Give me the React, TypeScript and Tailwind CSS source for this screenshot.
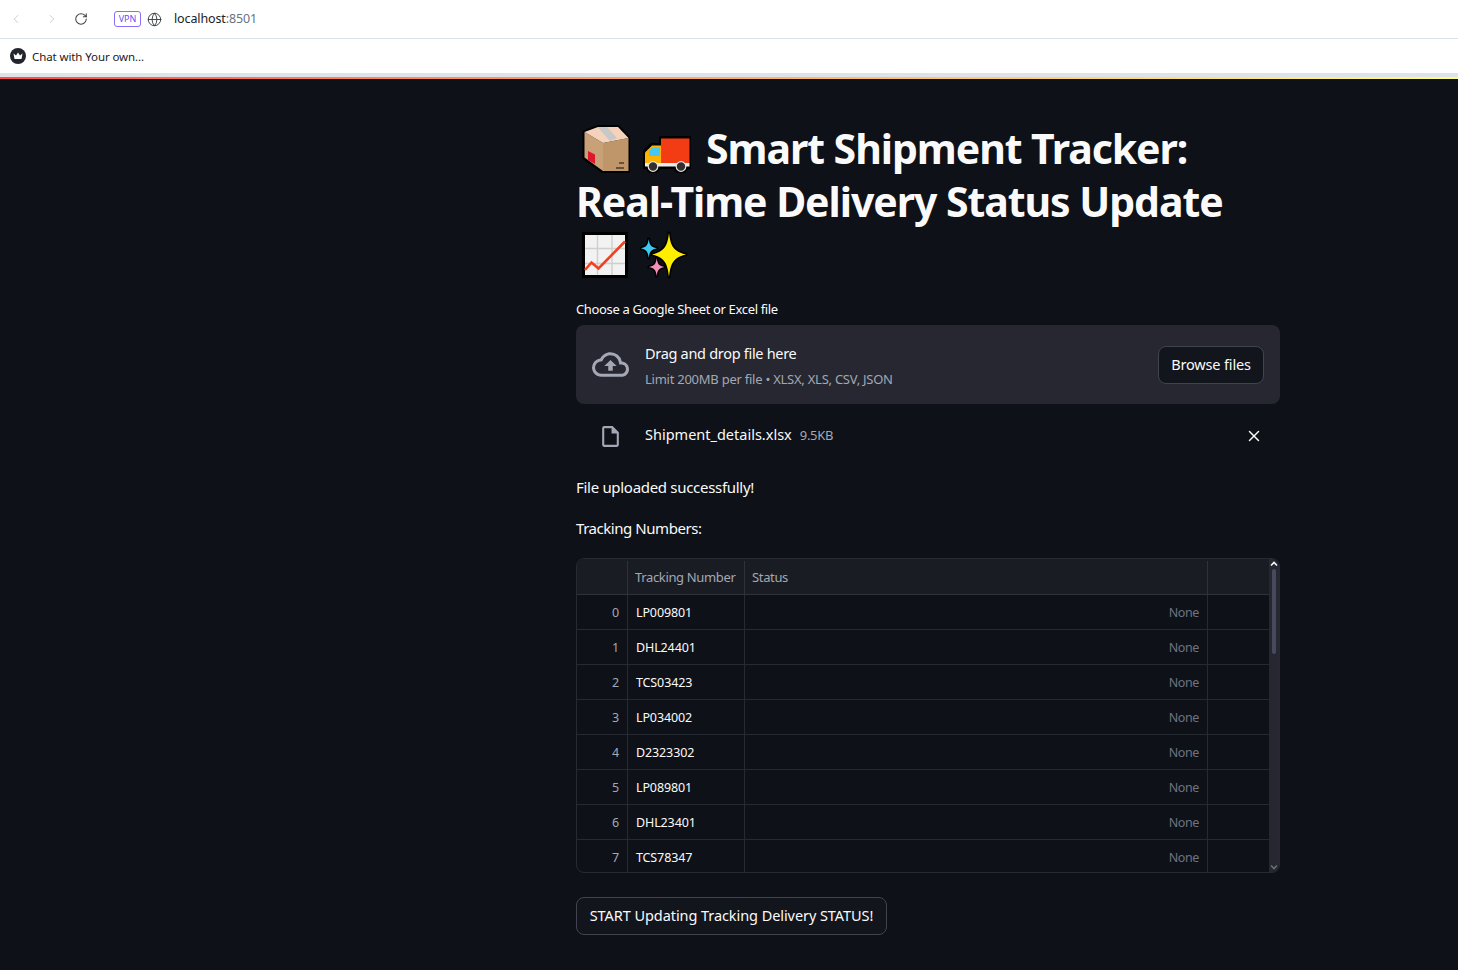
import { ChevronLeft, ChevronRight, Globe, RotateCw, X } from 'lucide-react';

const rows = ['LP009801', 'DHL24401', 'TCS03423', 'LP034002', 'D2323302', 'LP089801', 'DHL23401', 'TCS78347'];

const font = "font-['Noto_Sans',sans-serif]";

const BoxEmoji = () => (
  <svg width="48" height="48" viewBox="0 0 48 48" className="shrink-0">
    <path d="M2 7 L16 1.5 L36 1.5 L47 13 L47 47 L21 47 L2 33 Z" fill="#000" stroke="#000" strokeWidth="3" strokeLinejoin="round" />
    <path d="M2.5 7 L21 18 L21 46 L2.5 32.5 Z" fill="#c9a178" />
    <path d="M21 18 L46.5 13 L46.5 46 L21 46 Z" fill="#bf9669" />
    <path d="M2.5 7 L16 2 L36 2 L46.5 13 L21 18 Z" fill="#f5d2bb" />
    <path d="M15.5 2 L25 2 L35 13 L28 16 Z" fill="#c8c8c8" />
    <path d="M6 26 L13 29.5 L13 39 L6 35 Z" fill="#e0162b" />
    <path d="M34 43 H42 M37 38 H42" stroke="#4a3a2a" strokeWidth="1.3" />
  </svg>
);

const TruckEmoji = () => (
  <svg width="48" height="37" viewBox="0 0 48 37" className="shrink-0">
    <path d="M18 2 H46.5 V31 H43 A5 5 0 0 1 33 31 H15 A5 5 0 0 1 5 31 H1.5 V16 L8.5 9 H18 Z" fill="#000" stroke="#000" strokeWidth="4" strokeLinejoin="round" />
    <rect x="18" y="2.5" width="28.5" height="24.5" fill="#f43c14" />
    <path d="M2 27 V16.5 L9 9.5 H18 V27 Z" fill="#ffb300" />
    <path d="M9 11.5 H17 V20 H6 V15 Z" fill="#45c8f5" />
    <rect x="2" y="27" width="44.5" height="3.5" fill="#ececec" />
    <circle cx="10" cy="30.5" r="4.8" fill="#33302e" stroke="#e6e6e6" strokeWidth="1.2" />
    <circle cx="38" cy="30.5" r="4.8" fill="#33302e" stroke="#e6e6e6" strokeWidth="1.2" />
  </svg>
);

const ChartEmoji = () => (
  <svg width="46" height="46" viewBox="0 0 46 46" className="shrink-0">
    <rect x="1.5" y="1.5" width="43" height="43" fill="#f2f2f2" stroke="#000" strokeWidth="3" />
    <path d="M15.5 3 V43 M30 3 V43 M3 16.5 H43 M3 31.5 H43" stroke="#cfcfcf" strokeWidth="1.4" />
    <path d="M3 38 L9.5 30.5 L16.5 36.5 L43 9.5" fill="none" stroke="#f1411f" strokeWidth="2.6" />
  </svg>
);

const SparkleEmoji = () => (
  <svg width="50" height="48" viewBox="0 0 50 48" className="shrink-0">
    <path d="M29 2 C30.5 15 33.5 20.5 46 23.5 C33.5 26.5 30.5 32 29 46 C27.5 32 24.5 26.5 12 23.5 C24.5 20.5 27.5 15 29 2 Z" fill="#ffee00" stroke="#000" strokeWidth="3" strokeLinejoin="round" paintOrder="stroke" />
    <path d="M8.7 8 C9.4 14 11 16.2 17 17.3 C11 18.4 9.4 21 8.7 27 C8 21 6.4 18.4 0.8 17.3 C6.4 16.2 8 14 8.7 8 Z" fill="#3cc8f0" stroke="#000" strokeWidth="3" strokeLinejoin="round" paintOrder="stroke" />
    <path d="M16.7 27 C17.4 33 19 35 24.5 36 C19 37 17.4 39 16.7 45 C16 39 14.4 37 8.9 36 C14.4 35 16 33 16.7 27 Z" fill="#f48fb8" stroke="#000" strokeWidth="3" strokeLinejoin="round" paintOrder="stroke" />
  </svg>
);

const App = () => {
  return (
    <div className={`${font} flex h-[970px] w-[1458px] flex-col overflow-hidden bg-[#0e1117]`}>
      {/* Browser chrome */}
      <div className="flex h-[39px] items-center border-b border-[#d9e0e8] bg-white pl-[9px]">
        <ChevronLeft size={14} strokeWidth={1.25} className="text-[#b8bcc2]" />
        <ChevronRight size={14} strokeWidth={1.25} className="ml-[22px] text-[#b8bcc2]" />
        <RotateCw size={14} strokeWidth={1.75} className="ml-[15px] text-[#3c4043]" />
        <span className="ml-[26px] flex h-[16px] w-[27px] items-center justify-center rounded-[3px] border-[1.5px] border-[#8b6cfb] text-[9px] text-[#6b4ef0]">VPN</span>
        <Globe size={15} strokeWidth={1.5} className="ml-[6px] text-[#3c4043]" />
        <span className="ml-[12px] text-[12.5px] tracking-[-0.12px] text-[#202124]">
          localhost<span className="text-[#6b7280]">:8501</span>
        </span>
      </div>
      <div className="flex h-[34px] items-center gap-[6px] bg-white pl-[10px]">
        <svg width="16" height="16" viewBox="0 0 16 16">
          <circle cx="8" cy="8" r="8" fill="#22252b" />
          <path d="M3.5 5.5 L6 7.5 L8 4.5 L10 7.5 L12.5 5.5 L11.5 11 H4.5 Z" fill="#fff" />
        </svg>
        <span className="pt-[2px] text-[11.5px] tracking-[-0.1px] text-[#202124]">Chat with Your own...</span>
      </div>
      <div className="h-[4px] bg-[#dde3e9]" />
      <div className="h-[2px] bg-gradient-to-r from-[#ff4b4b] to-[#fffd80]" />

      {/* Page body */}
      <main className="ml-[576px] flex w-[704px] flex-col pt-[43px] text-white">
        <h1 className="text-[41px] leading-[53px] font-bold tracking-[-1.05px] text-[#fafafa]">
          <span className="flex items-center">
            <span className="ml-[6px] flex w-[124px] items-center">
              <BoxEmoji />
              <span className="mt-[11px] ml-[13px]"><TruckEmoji /></span>
            </span>
            Smart Shipment Tracker:
          </span>
          <span className="block">Real-Time Delivery Status Update</span>
          <span className="flex h-[53px] items-center pl-[6px]">
            <ChartEmoji />
            <span className="ml-[12px]"><SparkleEmoji /></span>
          </span>
        </h1>

        <label className="mt-[18px] text-[13px] leading-[20px] tracking-[-0.35px] text-[#fafafa]">Choose a Google Sheet or Excel file</label>

        <div className="mt-[6px] flex h-[79px] items-center rounded-lg bg-[#262730] pr-4 pl-4">
          <svg width="37" height="37" viewBox="0 0 24 24" fill="#a3a8b4" className="shrink-0">
            <path d="M19.35 10.04A7.49 7.49 0 0 0 12 4C9.11 4 6.6 5.64 5.35 8.04A5.994 5.994 0 0 0 0 14c0 3.31 2.69 6 6 6h13c2.76 0 5-2.24 5-5 0-2.64-2.05-4.78-4.65-4.96zM19 18H6c-2.21 0-4-1.79-4-4 0-2.05 1.53-3.76 3.56-3.97l1.07-.11.5-.95A5.469 5.469 0 0 1 12 6c2.62 0 4.88 1.86 5.39 4.43l.3 1.5 1.53.11A2.98 2.98 0 0 1 22 15c0 1.65-1.35 3-3 3zM8 13h2.55v3h2.9v-3H16l-4-4z" />
          </svg>
          <div className="ml-[16px] flex flex-1 flex-col">
            <span className="pt-[1px] text-[14.5px] leading-[22px] tracking-[-0.3px] text-[#fafafa]">Drag and drop file here</span>
            <span className="mt-[5px] text-[13px] leading-[20px] tracking-[-0.25px] text-[#a3a8b4]">Limit 200MB per file • XLSX, XLS, CSV, JSON</span>
          </div>
          <button className="flex h-[38px] w-[106px] items-center justify-center rounded-lg border border-[#41444e] bg-[#13151c] text-[14.5px] tracking-[-0.15px] text-[#fafafa]">Browse files</button>
        </div>

        <div className="mt-[12px] flex h-[40px] items-center pr-[17px] pl-[22px]">
          <svg width="25" height="25" viewBox="0 0 24 24" fill="#a3a8b4" className="shrink-0">
            <path d="M14 2H6c-1.1 0-2 .9-2 2v16c0 1.1.9 2 2 2h12c1.1 0 2-.9 2-2V8l-6-6zM6 20V4h7v5h5v11H6z" />
          </svg>
          <span className="ml-[22px] pb-[2px] text-[14.5px] text-[#fafafa]">Shipment_details.xlsx</span>
          <span className="ml-[8px] flex-1 text-[13px] tracking-[-0.3px] text-[#a3a8b4]">9.5KB</span>
          <X size={18} strokeWidth={2} className="text-[#fafafa]" />
        </div>

        <p className="mt-[19px] text-[15px] leading-[24px] tracking-[-0.3px] text-[#fafafa]">File uploaded successfully!</p>
        <p className="mt-[17px] text-[15px] leading-[24px] tracking-[-0.45px] text-[#fafafa]">Tracking Numbers:</p>

        {/* Data frame */}
        <div className="relative mt-[18px] h-[315px] overflow-hidden rounded-lg border border-[#262a33]">
          <div className="flex h-[36px] border-b border-[#2f323a] bg-[#1a1c24] pt-[2px] text-[13px] tracking-[-0.35px] text-[#a3a8b4]">
            <div className="w-[51px] border-r border-[#2f323a]" />
            <div className="flex w-[117px] items-center border-r border-[#2f323a] pl-[7px]">Tracking Number</div>
            <div className="flex w-[463px] items-center border-r border-[#2f323a] pl-[7px]">Status</div>
            <div className="flex-1" />
          </div>
          {rows.map((code, i) => (
            <div key={code} className="flex h-[35px] border-b border-[#262a33] text-[12.5px] tracking-[-0.12px]">
              <div className="flex w-[51px] items-center justify-end border-r border-[#262a33] pt-[2px] pr-[8px] text-[#a3a8b4]">{i}</div>
              <div className="flex w-[117px] items-center border-r border-[#262a33] pt-[2px] pl-[8px] text-[#fafafa]">{code}</div>
              <div className="flex w-[463px] items-center justify-end border-r border-[#262a33] pt-[2px] pr-[8px] tracking-[-0.4px] text-[#6f7480]">None</div>
              <div className="flex-1" />
            </div>
          ))}
          {/* Scrollbar */}
          <div className="absolute top-0 right-0 flex h-full w-[10px] flex-col items-center bg-[#262730]">
            <span className="mt-[1px] h-[8px] w-[8px] text-[#fafafa]">
              <svg viewBox="0 0 8 8" width="8" height="8"><path d="M1 5.5 L4 2.5 L7 5.5" fill="none" stroke="currentColor" strokeWidth="1.6" /></svg>
            </span>
            <div className="mt-[1px] h-[85px] w-[4px] rounded-sm bg-[#474a5c]" />
            <span className="mt-auto mb-[1px] h-[8px] w-[8px] text-[#6b6e78]">
              <svg viewBox="0 0 8 8" width="8" height="8"><path d="M1 2.5 L4 5.5 L7 2.5" fill="none" stroke="currentColor" strokeWidth="1.6" /></svg>
            </span>
          </div>
        </div>

        <button className="mt-[24px] flex h-[38px] w-[311px] items-center justify-center rounded-lg border border-[#41444e] bg-[#13151c] text-[14.5px] tracking-[-0.07px] text-[#fafafa]">START Updating Tracking Delivery STATUS!</button>
      </main>
    </div>
  );
};

export default App;
